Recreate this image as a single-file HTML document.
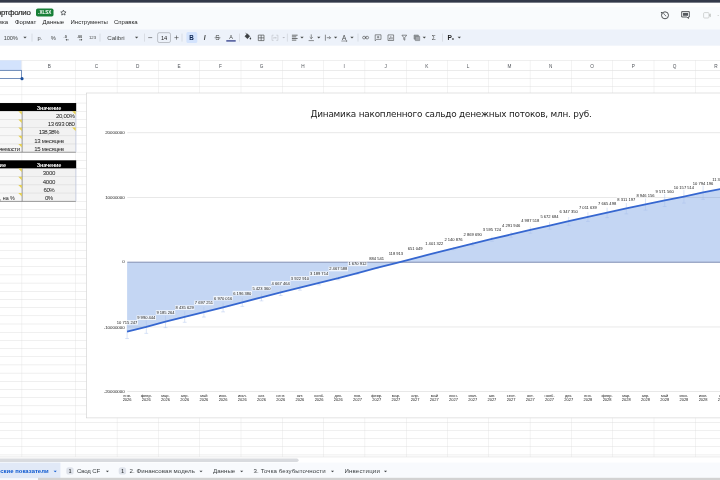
<!DOCTYPE html>
<html lang="ru"><head><meta charset="utf-8"><title>Sheets</title>
<style>
html,body{margin:0;padding:0;}
body{width:720px;height:480px;overflow:hidden;background:#fff;position:relative;font-family:"Liberation Sans",sans-serif;}
#wrap{position:absolute;left:0;top:0;width:720px;height:480px;overflow:hidden;will-change:transform;}
svg{position:absolute;left:0;top:0;overflow:hidden;font-family:"Liberation Sans",sans-serif;}
text{white-space:pre;}
</style></head><body><div id="wrap">

<svg width="720" height="480" viewBox="0 0 720 480">
<rect x="0.00" y="0.00" width="720.00" height="29.40" fill="#f9fbfd" />
<rect x="0.00" y="2.60" width="720.00" height="4.40" fill="#fefefe" />
<rect x="0.00" y="0.00" width="720.00" height="2.65" fill="#333949" />
<text x="30.45" y="14.65" font-size="7.9" fill="#1f1f1f" text-anchor="end" letter-spacing="-0.346" stroke="#1f1f1f" stroke-width="0.15">ортфолио</text>
<rect x="36.00" y="8.50" width="17.50" height="8.00" fill="#188038" rx="1.8"/>
<text x="44.75" y="14.20" font-size="4.6" fill="#ffffff" text-anchor="middle" font-weight="700">.XLSX</text>
<path d="M63.4 10.1l0.8 1.7 1.85 0.19-1.39 1.24 0.4 1.83-1.66-0.95-1.66 0.95 0.4-1.83-1.39-1.24 1.85-0.19z" fill="none" stroke="#3c4043" stroke-width="0.75" stroke-linejoin="round"/>
<text x="-1.20" y="24.10" font-size="6" fill="#1f1f1f" text-anchor="start">вка</text>
<text x="15.00" y="24.10" font-size="6" fill="#1f1f1f" text-anchor="start">Формат</text>
<text x="42.50" y="24.10" font-size="6" fill="#1f1f1f" text-anchor="start">Данные</text>
<text x="70.50" y="24.10" font-size="6" fill="#1f1f1f" text-anchor="start">Инструменты</text>
<text x="114.00" y="24.10" font-size="6" fill="#1f1f1f" text-anchor="start">Справка</text>
<rect x="-10.00" y="29.40" width="740.00" height="16.40" fill="#edf2fa" />
<text x="3.70" y="39.85" font-size="5.7" fill="#444746" text-anchor="start" letter-spacing="-0.145">100%</text>
<text x="39.80" y="39.85" font-size="5.7" fill="#444746" text-anchor="middle">р.</text>
<text x="53.20" y="39.85" font-size="5.7" fill="#444746" text-anchor="middle">%</text>
<text x="92.55" y="38.80" font-size="4.3" fill="#444746" text-anchor="middle">123</text>
<text x="107.20" y="39.80" font-size="6.2" fill="#444746" text-anchor="start" letter-spacing="-0.01">Calibri</text>
<rect x="157.6" y="32.7" width="12.9" height="9.8" rx="1.6" fill="none" stroke="#8a8f94" stroke-width="0.5"/>
<text x="164.10" y="39.85" font-size="5.7" fill="#1f1f1f" text-anchor="middle">14</text>
<rect x="186.4" y="32.1" width="10.9" height="10.9" rx="1.6" fill="#d3e3fd"/>
<text x="191.50" y="39.75" font-size="6.3" fill="#0a2350" text-anchor="middle" font-weight="700">B</text>
<text x="204.70" y="39.80" font-size="6.6" fill="#444746" text-anchor="middle" font-weight="700" font-style="italic">I</text>
<text x="217.50" y="39.95" font-size="6.6" fill="#444746" text-anchor="middle">S</text>
<text x="231.00" y="38.70" font-size="5.4" fill="#444746" text-anchor="middle">A</text>
<text x="433.80" y="40.00" font-size="6.4" fill="#444746" text-anchor="middle">Σ</text>
<text x="344.20" y="39.50" font-size="6.4" fill="#444746" text-anchor="middle">A</text>
<path d="M23.35 36.86h3.30l-1.65 1.65z" fill="#444746"/>
<rect x="31.75" y="33.6" width="0.5" height="8" fill="#c4c8ce"/>
<text x="65.2" y="38.0" font-size="3.9" fill="#444746" text-anchor="middle" font-weight="700">.0</text>
<path d="M66 39.8h2.8" stroke="#444746" stroke-width="0.55" fill="none"/><path d="M65.6 39.8l1.3-1v2z" fill="#444746"/>
<text x="79.6" y="38.0" font-size="3.9" fill="#444746" text-anchor="middle" font-weight="700">.00</text>
<path d="M79 39.8h2.6" stroke="#444746" stroke-width="0.55" fill="none"/><path d="M82.3 39.8l-1.3-1v2z" fill="#444746"/>
<rect x="99.75" y="33.6" width="0.5" height="8" fill="#c4c8ce"/>
<path d="M134.95 36.86h3.30l-1.65 1.65z" fill="#444746"/>
<rect x="144.05" y="33.6" width="0.5" height="8" fill="#c4c8ce"/>
<path d="M148.2 37.6h4" stroke="#444746" stroke-width="0.6"/>
<path d="M174.4 37.6h4.2M176.5 35.5v4.2" stroke="#444746" stroke-width="0.6"/>
<rect x="181.75" y="33.6" width="0.5" height="8" fill="#c4c8ce"/>
<path d="M214.6 37.7h5.8" stroke="#444746" stroke-width="0.55"/>
<rect x="226.3" y="40.2" width="9.4" height="1.4" fill="#3b4890"/>
<rect x="239.25" y="33.6" width="0.5" height="8" fill="#c4c8ce"/>
<path d="M244.9 36.2l2.4-2.4 2.5 2.5-2.4 2.4z" fill="#3c4043" stroke="#3c4043" stroke-width="0.5" stroke-linejoin="round"/><path d="M245.6 33.2l1.6 1.2" stroke="#3c4043" stroke-width="0.7"/>
<path d="M250.4 37.2c0.5 0.7 0.8 1.1 0.8 1.5a0.8 0.8 0 0 1-1.6 0c0-0.4 0.3-0.8 0.8-1.5z" fill="#3c4043"/>
<path d="M258.3 35.1h5.7v5.5h-5.7zM261.15 35.1v5.5M258.3 37.85h5.7" fill="none" stroke="#444746" stroke-width="0.65"/>
<path d="M273.6 35.2h-1.6v5.2h1.6M276.3 35.2h1.6v5.2h-1.6M273 37.8h1.4M276.9 37.8h-1.4M273.9 37l0.8 0.8-0.8 0.8M276 37l-0.8 0.8 0.8 0.8" fill="none" stroke="#b9bdc3" stroke-width="0.55"/>
<path d="M282.30 36.97h2.80l-1.40 1.40z" fill="#b3b7bd"/>
<rect x="286.95" y="33.6" width="0.5" height="8" fill="#c4c8ce"/>
<path d="M291.9 35.2h5.7M291.9 36.85h4.4M291.9 38.5h5.7M291.9 40.15h4.4" stroke="#444746" stroke-width="0.75"/>
<path d="M300.35 36.86h3.30l-1.65 1.65z" fill="#444746"/>
<path d="M311.25 34.4v4.2M309.7 37.2l1.55 1.5 1.55-1.5M308.6 40.6h5.3" fill="none" stroke="#444746" stroke-width="0.6"/>
<path d="M317.15 36.86h3.30l-1.65 1.65z" fill="#444746"/>
<path d="M325.4 34.7v6M326.8 37.7h3.7M329.2 36.3l1.4 1.4-1.4 1.4" fill="none" stroke="#444746" stroke-width="0.6"/>
<path d="M333.95 36.86h3.30l-1.65 1.65z" fill="#444746"/>
<path d="M341.3 41h5.8M346.2 40.2l0.9 0.8-0.9 0.8" fill="none" stroke="#444746" stroke-width="0.5"/>
<path d="M350.35 36.86h3.30l-1.65 1.65z" fill="#444746"/>
<rect x="357.75" y="33.6" width="0.5" height="8" fill="#c4c8ce"/>
<path d="M364.8 37.6h1.6" stroke="#444746" stroke-width="0.6"/><rect x="362.6" y="36.3" width="3" height="2.6" rx="1.3" fill="none" stroke="#444746" stroke-width="0.6"/><rect x="365.6" y="36.3" width="3" height="2.6" rx="1.3" fill="none" stroke="#444746" stroke-width="0.6"/>
<path d="M375.2 34.8h5.8v4.6h-4.4l-1.4 1.4zM378.1 35.9v2.4M376.9 37.1h2.4" fill="none" stroke="#444746" stroke-width="0.6" stroke-linejoin="round"/>
<path d="M388 34.9h5.6v5.6h-5.6z" fill="none" stroke="#444746" stroke-width="0.6"/><path d="M389.5 39.4v-1.6M390.8 39.4v-3.2M392.1 39.4v-2.2" stroke="#444746" stroke-width="0.6"/>
<path d="M401.9 35.2h4.8l-1.9 2.4v2.6l-1 -0.6v-2z" fill="none" stroke="#444746" stroke-width="0.6" stroke-linejoin="round"/>
<path d="M414 35h4.4v4.2h-4.4z" fill="#9a9ea3" stroke="#6b7075" stroke-width="0.5"/><path d="M415.3 36.4h4.4v4.2h-4.4z" fill="#a4a8ad" stroke="#6b7075" stroke-width="0.5"/>
<path d="M422.65 36.86h3.30l-1.65 1.65z" fill="#444746"/>
<rect x="442.25" y="33.6" width="0.5" height="8" fill="#c4c8ce"/>
<text x="447.6" y="39.9" font-size="6.6" fill="#1f1f1f" font-weight="700" font-family="Liberation Sans, sans-serif">P</text>
<text x="451.7" y="40.3" font-size="4" fill="#1f1f1f" font-weight="700" font-family="Liberation Sans, sans-serif">x</text>
<path d="M457.65 36.86h3.30l-1.65 1.65z" fill="#444746"/>
<circle cx="665" cy="15.3" r="3.5" fill="none" stroke="#3c4043" stroke-width="0.9"/><path d="M663.4 13.1l1.6 2.2 1.2 0.8" fill="none" stroke="#3c4043" stroke-width="0.7"/><path d="M660.7 11.9l1.6 0.2-0.4 1.6z" fill="#3c4043"/>
<path d="M681.7 11.6h7.6v5.4h-0.9l0 1.5-1.5-1.5h-5.2z" fill="none" stroke="#3c4043" stroke-width="0.85" stroke-linejoin="round"/><path d="M683 12.9h5v2.9h-5z" fill="#55595e"/>
<rect x="703.6" y="12.6" width="5.4" height="5.4" rx="1" fill="none" stroke="#c4c7c5" stroke-width="0.75"/><path d="M709 14.6l1.8-1.2v3.8l-1.8-1.2z" fill="#c4c7c5"/>
<path d="M717.20 14.95h2.00l-1.00 1.00z" fill="#c4c7c5"/>
<rect x="0.00" y="45.80" width="720.00" height="14.20" fill="#ffffff" />
<rect x="0.00" y="60.05" width="720.00" height="0.50" fill="#dedede" />
<rect x="0.00" y="60.30" width="21.50" height="10.00" fill="#d3e3fd" />
<rect x="0.00" y="70.10" width="720.00" height="0.50" fill="#d6d6d6" />
<text x="49.40" y="68.00" font-size="4.7" fill="#50545a" text-anchor="middle">B</text>
<text x="96.50" y="68.00" font-size="4.7" fill="#50545a" text-anchor="middle">C</text>
<text x="137.75" y="68.00" font-size="4.7" fill="#50545a" text-anchor="middle">D</text>
<text x="179.05" y="68.00" font-size="4.7" fill="#50545a" text-anchor="middle">E</text>
<text x="220.35" y="68.00" font-size="4.7" fill="#50545a" text-anchor="middle">F</text>
<text x="261.65" y="68.00" font-size="4.7" fill="#50545a" text-anchor="middle">G</text>
<text x="302.95" y="68.00" font-size="4.7" fill="#50545a" text-anchor="middle">H</text>
<text x="344.25" y="68.00" font-size="4.7" fill="#50545a" text-anchor="middle">I</text>
<text x="385.55" y="68.00" font-size="4.7" fill="#50545a" text-anchor="middle">J</text>
<text x="426.85" y="68.00" font-size="4.7" fill="#50545a" text-anchor="middle">K</text>
<text x="468.15" y="68.00" font-size="4.7" fill="#50545a" text-anchor="middle">L</text>
<text x="509.45" y="68.00" font-size="4.7" fill="#50545a" text-anchor="middle">M</text>
<text x="550.75" y="68.00" font-size="4.7" fill="#50545a" text-anchor="middle">N</text>
<text x="592.05" y="68.00" font-size="4.7" fill="#50545a" text-anchor="middle">O</text>
<text x="633.35" y="68.00" font-size="4.7" fill="#50545a" text-anchor="middle">P</text>
<text x="674.65" y="68.00" font-size="4.7" fill="#50545a" text-anchor="middle">Q</text>
<text x="715.95" y="68.00" font-size="4.7" fill="#50545a" text-anchor="middle">R</text>
<rect x="21.70" y="60.2" width="0.4" height="396.7" fill="#e0e0e0"/>
<rect x="75.60" y="60.2" width="0.4" height="396.7" fill="#e0e0e0"/>
<rect x="116.90" y="60.2" width="0.4" height="396.7" fill="#e0e0e0"/>
<rect x="158.20" y="60.2" width="0.4" height="396.7" fill="#e0e0e0"/>
<rect x="199.50" y="60.2" width="0.4" height="396.7" fill="#e0e0e0"/>
<rect x="240.80" y="60.2" width="0.4" height="396.7" fill="#e0e0e0"/>
<rect x="282.10" y="60.2" width="0.4" height="396.7" fill="#e0e0e0"/>
<rect x="323.40" y="60.2" width="0.4" height="396.7" fill="#e0e0e0"/>
<rect x="364.70" y="60.2" width="0.4" height="396.7" fill="#e0e0e0"/>
<rect x="406.00" y="60.2" width="0.4" height="396.7" fill="#e0e0e0"/>
<rect x="447.30" y="60.2" width="0.4" height="396.7" fill="#e0e0e0"/>
<rect x="488.60" y="60.2" width="0.4" height="396.7" fill="#e0e0e0"/>
<rect x="529.90" y="60.2" width="0.4" height="396.7" fill="#e0e0e0"/>
<rect x="571.20" y="60.2" width="0.4" height="396.7" fill="#e0e0e0"/>
<rect x="612.50" y="60.2" width="0.4" height="396.7" fill="#e0e0e0"/>
<rect x="653.80" y="60.2" width="0.4" height="396.7" fill="#e0e0e0"/>
<rect x="695.10" y="60.2" width="0.4" height="396.7" fill="#e0e0e0"/>
<rect x="736.40" y="60.2" width="0.4" height="396.7" fill="#e0e0e0"/>
<rect x="0" y="78.27" width="720" height="0.42" fill="#dadada"/>
<rect x="0" y="86.46" width="720" height="0.42" fill="#dadada"/>
<rect x="0" y="94.64" width="720" height="0.42" fill="#dadada"/>
<rect x="0" y="102.83" width="720" height="0.42" fill="#dadada"/>
<rect x="0" y="111.01" width="720" height="0.42" fill="#dadada"/>
<rect x="0" y="119.19" width="720" height="0.42" fill="#dadada"/>
<rect x="0" y="127.38" width="720" height="0.42" fill="#dadada"/>
<rect x="0" y="135.56" width="720" height="0.42" fill="#dadada"/>
<rect x="0" y="143.75" width="720" height="0.42" fill="#dadada"/>
<rect x="0" y="151.93" width="720" height="0.42" fill="#dadada"/>
<rect x="0" y="160.11" width="720" height="0.42" fill="#dadada"/>
<rect x="0" y="168.30" width="720" height="0.42" fill="#dadada"/>
<rect x="0" y="176.48" width="720" height="0.42" fill="#dadada"/>
<rect x="0" y="184.67" width="720" height="0.42" fill="#dadada"/>
<rect x="0" y="192.85" width="720" height="0.42" fill="#dadada"/>
<rect x="0" y="201.03" width="720" height="0.42" fill="#dadada"/>
<rect x="0" y="209.22" width="720" height="0.42" fill="#dadada"/>
<rect x="0" y="217.40" width="720" height="0.42" fill="#dadada"/>
<rect x="0" y="225.59" width="720" height="0.42" fill="#dadada"/>
<rect x="0" y="233.77" width="720" height="0.42" fill="#dadada"/>
<rect x="0" y="241.95" width="720" height="0.42" fill="#dadada"/>
<rect x="0" y="250.14" width="720" height="0.42" fill="#dadada"/>
<rect x="0" y="258.32" width="720" height="0.42" fill="#dadada"/>
<rect x="0" y="266.51" width="720" height="0.42" fill="#dadada"/>
<rect x="0" y="274.69" width="720" height="0.42" fill="#dadada"/>
<rect x="0" y="282.87" width="720" height="0.42" fill="#dadada"/>
<rect x="0" y="291.06" width="720" height="0.42" fill="#dadada"/>
<rect x="0" y="299.24" width="720" height="0.42" fill="#dadada"/>
<rect x="0" y="307.43" width="720" height="0.42" fill="#dadada"/>
<rect x="0" y="315.61" width="720" height="0.42" fill="#dadada"/>
<rect x="0" y="323.79" width="720" height="0.42" fill="#dadada"/>
<rect x="0" y="331.98" width="720" height="0.42" fill="#dadada"/>
<rect x="0" y="340.16" width="720" height="0.42" fill="#dadada"/>
<rect x="0" y="348.35" width="720" height="0.42" fill="#dadada"/>
<rect x="0" y="356.53" width="720" height="0.42" fill="#dadada"/>
<rect x="0" y="364.71" width="720" height="0.42" fill="#dadada"/>
<rect x="0" y="372.90" width="720" height="0.42" fill="#dadada"/>
<rect x="0" y="381.08" width="720" height="0.42" fill="#dadada"/>
<rect x="0" y="389.27" width="720" height="0.42" fill="#dadada"/>
<rect x="0" y="397.45" width="720" height="0.42" fill="#dadada"/>
<rect x="0" y="405.63" width="720" height="0.42" fill="#dadada"/>
<rect x="0" y="413.82" width="720" height="0.42" fill="#dadada"/>
<rect x="0" y="422.00" width="720" height="0.42" fill="#dadada"/>
<rect x="0" y="430.19" width="720" height="0.42" fill="#dadada"/>
<rect x="0" y="438.37" width="720" height="0.42" fill="#dadada"/>
<rect x="0" y="446.55" width="720" height="0.42" fill="#dadada"/>
<rect x="0" y="454.74" width="720" height="0.42" fill="#dadada"/>
<rect x="0" y="103.04" width="76.2" height="8.38" fill="#000"/>
<rect x="0" y="111.22" width="22" height="40.92" fill="#f7f7f7"/>
<rect x="22" y="111.22" width="54" height="40.92" fill="#f2f2f2"/>
<rect x="0" y="119.10" width="75.9" height="0.6" fill="#dadada"/>
<rect x="0" y="127.29" width="75.9" height="0.6" fill="#dadada"/>
<rect x="0" y="135.47" width="75.9" height="0.6" fill="#dadada"/>
<rect x="0" y="143.66" width="75.9" height="0.6" fill="#dadada"/>
<rect x="0" y="151.84" width="75.9" height="0.6" fill="#5e5e5e"/>
<rect x="21.75" y="111.22" width="0.65" height="40.92" fill="#666"/>
<rect x="75.5" y="111.22" width="0.8" height="40.92" fill="#bcc3da"/>
<path d="M18.30 111.22h3.5v3.5z" fill="#e4cc3c" fill-opacity="0.9"/>
<path d="M72.10 111.22h3.5v3.5z" fill="#e4cc3c" fill-opacity="0.9"/>
<path d="M18.30 119.40h3.5v3.5z" fill="#e4cc3c" fill-opacity="0.9"/>
<path d="M18.30 127.59h3.5v3.5z" fill="#e4cc3c" fill-opacity="0.9"/>
<path d="M72.10 127.59h3.5v3.5z" fill="#e4cc3c" fill-opacity="0.9"/>
<path d="M18.30 135.77h3.5v3.5z" fill="#e4cc3c" fill-opacity="0.9"/>
<path d="M18.30 143.96h3.5v3.5z" fill="#e4cc3c" fill-opacity="0.9"/>
<text x="49.02" y="109.57" font-size="5.5" fill="#ffffff" text-anchor="middle" font-weight="700" letter-spacing="-0.15">Значение</text>
<text x="74.69" y="118.05" font-size="6.1" fill="#1a1a1a" text-anchor="end" letter-spacing="-0.315">20,00%</text>
<text x="74.65" y="126.24" font-size="6.1" fill="#1a1a1a" text-anchor="end" letter-spacing="-0.353">13 693 080</text>
<text x="48.84" y="134.42" font-size="6.1" fill="#1a1a1a" text-anchor="middle" letter-spacing="-0.526">138,38%</text>
<text x="48.95" y="142.61" font-size="6.1" fill="#1a1a1a" text-anchor="middle" letter-spacing="-0.308">13 месяцев</text>
<text x="19.64" y="150.79" font-size="6.0" fill="#1a1a1a" text-anchor="end" letter-spacing="-0.364">яемости</text>
<text x="48.95" y="150.79" font-size="6.1" fill="#1a1a1a" text-anchor="middle" letter-spacing="-0.308">15 месяцев</text>
<rect x="0" y="160.32" width="76.2" height="8.38" fill="#000"/>
<rect x="0" y="168.51" width="22" height="32.74" fill="#f7f7f7"/>
<rect x="22" y="168.51" width="54" height="32.74" fill="#f2f2f2"/>
<rect x="0" y="176.39" width="75.9" height="0.6" fill="#dadada"/>
<rect x="0" y="184.58" width="75.9" height="0.6" fill="#dadada"/>
<rect x="0" y="192.76" width="75.9" height="0.6" fill="#dadada"/>
<rect x="0" y="200.94" width="75.9" height="0.6" fill="#5e5e5e"/>
<rect x="21.75" y="168.51" width="0.65" height="32.74" fill="#666"/>
<rect x="75.5" y="168.51" width="0.8" height="32.74" fill="#bcc3da"/>
<path d="M18.30 168.51h3.5v3.5z" fill="#e4cc3c" fill-opacity="0.9"/>
<path d="M18.30 176.69h3.5v3.5z" fill="#e4cc3c" fill-opacity="0.9"/>
<path d="M18.30 184.88h3.5v3.5z" fill="#e4cc3c" fill-opacity="0.9"/>
<path d="M18.30 193.06h3.5v3.5z" fill="#e4cc3c" fill-opacity="0.9"/>
<text x="49.02" y="166.86" font-size="5.5" fill="#ffffff" text-anchor="middle" font-weight="700" letter-spacing="-0.15">Значение</text>
<text x="-0.50" y="166.86" font-size="5.5" fill="#ffffff" text-anchor="start" font-weight="700">ие</text>
<text x="48.93" y="175.34" font-size="6.1" fill="#1a1a1a" text-anchor="middle" letter-spacing="-0.343">3000</text>
<text x="48.93" y="183.53" font-size="6.1" fill="#1a1a1a" text-anchor="middle" letter-spacing="-0.343">4000</text>
<text x="48.83" y="191.71" font-size="6.1" fill="#1a1a1a" text-anchor="middle" letter-spacing="-0.536">60%</text>
<text x="14.63" y="199.89" font-size="5.3" fill="#1a1a1a" text-anchor="end" letter-spacing="-0.067">, на %</text>
<text x="48.80" y="199.89" font-size="6.1" fill="#1a1a1a" text-anchor="middle" letter-spacing="-0.608">0%</text>
<rect x="-2" y="70.3" width="23.5" height="8.1" fill="none" stroke="#3d66a6" stroke-width="0.7"/>
<circle cx="22" cy="78.7" r="1.6" fill="#1c4f9c"/>
<rect x="86.4" y="93.0" width="660" height="324.9" fill="#fff" stroke="#cfcfcf" stroke-width="0.6"/>
<text x="451.10" y="117.20" font-size="8.9" fill="#1a1a1a" text-anchor="middle" letter-spacing="-0.207" font-family="'DejaVu Sans', sans-serif">Динамика накопленного сальдо денежных потоков, млн. руб.</text>
<rect x="127.3" y="132.51" width="600" height="0.6" fill="#d9d9d9"/>
<text x="124.70" y="134.41" font-size="4.4" fill="#222" text-anchor="end">20000000</text>
<rect x="127.3" y="197.23" width="600" height="0.6" fill="#d9d9d9"/>
<text x="124.70" y="199.13" font-size="4.4" fill="#222" text-anchor="end">10000000</text>
<text x="124.70" y="263.35" font-size="4.4" fill="#222" text-anchor="end">0</text>
<rect x="127.3" y="326.67" width="600" height="0.6" fill="#d9d9d9"/>
<text x="124.70" y="328.57" font-size="4.4" fill="#222" text-anchor="end">-10000000</text>
<rect x="127.3" y="391.39" width="600" height="0.6" fill="#d9d9d9"/>
<text x="124.70" y="393.29" font-size="4.4" fill="#222" text-anchor="end">-20000000</text>
<polygon points="127.10,262.25 127.10,331.60 146.30,326.91 165.50,321.70 184.70,316.85 203.90,312.07 223.10,307.36 242.30,302.35 261.50,297.35 280.70,292.46 299.90,287.64 319.10,282.89 338.30,278.22 357.50,273.06 376.70,267.97 395.90,263.02 415.10,258.04 434.30,253.18 453.50,248.39 472.70,243.68 491.90,238.98 511.10,234.47 530.30,229.97 549.50,225.54 568.70,221.17 587.90,216.87 607.10,212.64 626.30,208.46 645.50,204.35 664.70,200.30 683.90,196.51 703.10,192.39 722.30,188.59 741.50,184.59 741.50,262.25" fill="#3c78d8" fill-opacity="0.3"/>
<rect x="127.3" y="261.65" width="600" height="1.2" fill="#909dbe"/>
<path d="M127.10 324.66V338.53M125.20 338.53h3.80" stroke="#a6bdec" stroke-width="0.42" fill="none"/>
<path d="M146.30 320.44V333.37M144.40 333.37h3.80" stroke="#a6bdec" stroke-width="0.42" fill="none"/>
<path d="M165.50 315.75V327.64M163.60 327.64h3.80" stroke="#a6bdec" stroke-width="0.42" fill="none"/>
<path d="M184.70 311.39V322.30M182.80 322.30h3.80" stroke="#a6bdec" stroke-width="0.42" fill="none"/>
<path d="M203.90 307.08V317.05M202.00 317.05h3.80" stroke="#a6bdec" stroke-width="0.42" fill="none"/>
<path d="M223.10 302.85V311.87M221.20 311.87h3.80" stroke="#a6bdec" stroke-width="0.42" fill="none"/>
<path d="M242.30 298.34V306.36M240.40 306.36h3.80" stroke="#a6bdec" stroke-width="0.42" fill="none"/>
<path d="M261.50 293.84V300.86M259.60 300.86h3.80" stroke="#a6bdec" stroke-width="0.42" fill="none"/>
<path d="M280.70 289.44V295.48M278.80 295.48h3.80" stroke="#a6bdec" stroke-width="0.42" fill="none"/>
<path d="M299.90 285.10V290.18M298.00 290.18h3.80" stroke="#a6bdec" stroke-width="0.42" fill="none"/>
<path d="M319.10 280.83V284.96M317.20 284.96h3.80" stroke="#a6bdec" stroke-width="0.42" fill="none"/>
<path d="M338.30 276.62V279.82M336.40 279.82h3.80" stroke="#a6bdec" stroke-width="0.42" fill="none"/>
<path d="M357.50 271.98V274.15M355.60 274.15h3.80" stroke="#a6bdec" stroke-width="0.42" fill="none"/>
<path d="M376.70 267.40V268.55M374.80 268.55h3.80" stroke="#a6bdec" stroke-width="0.42" fill="none"/>
<path d="M415.10 257.62V258.46M413.20 258.46h3.80" stroke="#a6bdec" stroke-width="0.42" fill="none"/>
<path d="M434.30 252.27V254.09M432.40 254.09h3.80" stroke="#a6bdec" stroke-width="0.42" fill="none"/>
<path d="M453.50 247.01V249.78M451.60 249.78h3.80" stroke="#a6bdec" stroke-width="0.42" fill="none"/>
<path d="M472.70 241.82V245.53M470.80 245.53h3.80" stroke="#a6bdec" stroke-width="0.42" fill="none"/>
<path d="M491.90 236.65V241.31M490.00 241.31h3.80" stroke="#a6bdec" stroke-width="0.42" fill="none"/>
<path d="M511.10 231.69V237.25M509.20 237.25h3.80" stroke="#a6bdec" stroke-width="0.42" fill="none"/>
<path d="M530.30 226.74V233.20M528.40 233.20h3.80" stroke="#a6bdec" stroke-width="0.42" fill="none"/>
<path d="M549.50 221.87V229.21M547.60 229.21h3.80" stroke="#a6bdec" stroke-width="0.42" fill="none"/>
<path d="M568.70 217.06V225.28M566.80 225.28h3.80" stroke="#a6bdec" stroke-width="0.42" fill="none"/>
<path d="M587.90 212.33V221.41M586.00 221.41h3.80" stroke="#a6bdec" stroke-width="0.42" fill="none"/>
<path d="M607.10 207.68V217.60M605.20 217.60h3.80" stroke="#a6bdec" stroke-width="0.42" fill="none"/>
<path d="M626.30 203.08V213.84M624.40 213.84h3.80" stroke="#a6bdec" stroke-width="0.42" fill="none"/>
<path d="M645.50 198.56V210.14M643.60 210.14h3.80" stroke="#a6bdec" stroke-width="0.42" fill="none"/>
<path d="M664.70 194.11V206.50M662.80 206.50h3.80" stroke="#a6bdec" stroke-width="0.42" fill="none"/>
<path d="M683.90 189.94V203.08M682.00 203.08h3.80" stroke="#a6bdec" stroke-width="0.42" fill="none"/>
<path d="M703.10 185.40V199.38M701.20 199.38h3.80" stroke="#a6bdec" stroke-width="0.42" fill="none"/>
<path d="M722.30 181.22V195.96M720.40 195.96h3.80" stroke="#a6bdec" stroke-width="0.42" fill="none"/>
<path d="M741.50 176.82V192.35M739.60 192.35h3.80" stroke="#a6bdec" stroke-width="0.42" fill="none"/>
<polyline points="127.10,331.60 146.30,326.91 165.50,321.70 184.70,316.85 203.90,312.07 223.10,307.36 242.30,302.35 261.50,297.35 280.70,292.46 299.90,287.64 319.10,282.89 338.30,278.22 357.50,273.06 376.70,267.97 395.90,263.02 415.10,258.04 434.30,253.18 453.50,248.39 472.70,243.68 491.90,238.98 511.10,234.47 530.30,229.97 549.50,225.54 568.70,221.17 587.90,216.87 607.10,212.64 626.30,208.46 645.50,204.35 664.70,200.30 683.90,196.51 703.10,192.39 722.30,188.59 741.50,184.59" fill="none" stroke="#3667d0" stroke-width="1.8" stroke-linejoin="round"/>
<rect x="116.24" y="320.10" width="21.72" height="4.6" fill="#ffffff" fill-opacity="0.75"/>
<text x="127.10" y="323.87" font-size="4.1" fill="#222" text-anchor="middle">10 715 247</text>
<rect x="136.58" y="315.41" width="19.44" height="4.6" fill="#ffffff" fill-opacity="0.75"/>
<text x="146.30" y="319.18" font-size="4.1" fill="#222" text-anchor="middle">9 990 444</text>
<rect x="155.78" y="310.20" width="19.44" height="4.6" fill="#ffffff" fill-opacity="0.75"/>
<text x="165.50" y="313.97" font-size="4.1" fill="#222" text-anchor="middle">9 185 264</text>
<rect x="174.98" y="305.35" width="19.44" height="4.6" fill="#ffffff" fill-opacity="0.75"/>
<text x="184.70" y="309.12" font-size="4.1" fill="#222" text-anchor="middle">8 435 629</text>
<rect x="194.18" y="300.57" width="19.44" height="4.6" fill="#ffffff" fill-opacity="0.75"/>
<text x="203.90" y="304.34" font-size="4.1" fill="#222" text-anchor="middle">7 697 251</text>
<rect x="213.38" y="295.86" width="19.44" height="4.6" fill="#ffffff" fill-opacity="0.75"/>
<text x="223.10" y="299.63" font-size="4.1" fill="#222" text-anchor="middle">6 970 016</text>
<rect x="232.58" y="290.85" width="19.44" height="4.6" fill="#ffffff" fill-opacity="0.75"/>
<text x="242.30" y="294.62" font-size="4.1" fill="#222" text-anchor="middle">6 196 380</text>
<rect x="251.78" y="285.85" width="19.44" height="4.6" fill="#ffffff" fill-opacity="0.75"/>
<text x="261.50" y="289.62" font-size="4.1" fill="#222" text-anchor="middle">5 423 360</text>
<rect x="270.98" y="280.96" width="19.44" height="4.6" fill="#ffffff" fill-opacity="0.75"/>
<text x="280.70" y="284.73" font-size="4.1" fill="#222" text-anchor="middle">4 667 464</text>
<rect x="290.18" y="276.14" width="19.44" height="4.6" fill="#ffffff" fill-opacity="0.75"/>
<text x="299.90" y="279.91" font-size="4.1" fill="#222" text-anchor="middle">3 922 910</text>
<rect x="309.38" y="271.39" width="19.44" height="4.6" fill="#ffffff" fill-opacity="0.75"/>
<text x="319.10" y="275.16" font-size="4.1" fill="#222" text-anchor="middle">3 189 714</text>
<rect x="328.58" y="266.72" width="19.44" height="4.6" fill="#ffffff" fill-opacity="0.75"/>
<text x="338.30" y="270.49" font-size="4.1" fill="#222" text-anchor="middle">2 467 588</text>
<rect x="347.78" y="261.56" width="19.44" height="4.6" fill="#ffffff" fill-opacity="0.75"/>
<text x="357.50" y="265.33" font-size="4.1" fill="#222" text-anchor="middle">1 670 912</text>
<rect x="368.69" y="256.47" width="16.02" height="4.6" fill="#ffffff" fill-opacity="0.75"/>
<text x="376.70" y="260.24" font-size="4.1" fill="#222" text-anchor="middle">884 541</text>
<rect x="388.04" y="251.52" width="15.72" height="4.6" fill="#ffffff" fill-opacity="0.75"/>
<text x="395.90" y="255.29" font-size="4.1" fill="#222" text-anchor="middle">118 913</text>
<rect x="407.09" y="246.54" width="16.02" height="4.6" fill="#ffffff" fill-opacity="0.75"/>
<text x="415.10" y="250.31" font-size="4.1" fill="#222" text-anchor="middle">651 049</text>
<rect x="424.58" y="241.68" width="19.44" height="4.6" fill="#ffffff" fill-opacity="0.75"/>
<text x="434.30" y="245.45" font-size="4.1" fill="#222" text-anchor="middle">1 401 322</text>
<rect x="443.78" y="236.89" width="19.44" height="4.6" fill="#ffffff" fill-opacity="0.75"/>
<text x="453.50" y="240.66" font-size="4.1" fill="#222" text-anchor="middle">2 140 876</text>
<rect x="462.98" y="232.18" width="19.44" height="4.6" fill="#ffffff" fill-opacity="0.75"/>
<text x="472.70" y="235.95" font-size="4.1" fill="#222" text-anchor="middle">2 869 690</text>
<rect x="482.18" y="227.48" width="19.44" height="4.6" fill="#ffffff" fill-opacity="0.75"/>
<text x="491.90" y="231.25" font-size="4.1" fill="#222" text-anchor="middle">3 595 724</text>
<rect x="501.38" y="222.97" width="19.44" height="4.6" fill="#ffffff" fill-opacity="0.75"/>
<text x="511.10" y="226.74" font-size="4.1" fill="#222" text-anchor="middle">4 291 946</text>
<rect x="520.58" y="218.47" width="19.44" height="4.6" fill="#ffffff" fill-opacity="0.75"/>
<text x="530.30" y="222.24" font-size="4.1" fill="#222" text-anchor="middle">4 987 518</text>
<rect x="539.78" y="214.04" width="19.44" height="4.6" fill="#ffffff" fill-opacity="0.75"/>
<text x="549.50" y="217.81" font-size="4.1" fill="#222" text-anchor="middle">5 672 684</text>
<rect x="558.98" y="209.67" width="19.44" height="4.6" fill="#ffffff" fill-opacity="0.75"/>
<text x="568.70" y="213.44" font-size="4.1" fill="#222" text-anchor="middle">6 347 350</text>
<rect x="578.33" y="205.37" width="19.14" height="4.6" fill="#ffffff" fill-opacity="0.75"/>
<text x="587.90" y="209.14" font-size="4.1" fill="#222" text-anchor="middle">7 011 639</text>
<rect x="597.38" y="201.14" width="19.44" height="4.6" fill="#ffffff" fill-opacity="0.75"/>
<text x="607.10" y="204.91" font-size="4.1" fill="#222" text-anchor="middle">7 665 498</text>
<rect x="616.73" y="196.96" width="19.14" height="4.6" fill="#ffffff" fill-opacity="0.75"/>
<text x="626.30" y="200.73" font-size="4.1" fill="#222" text-anchor="middle">8 311 197</text>
<rect x="635.78" y="192.85" width="19.44" height="4.6" fill="#ffffff" fill-opacity="0.75"/>
<text x="645.50" y="196.62" font-size="4.1" fill="#222" text-anchor="middle">8 946 156</text>
<rect x="654.98" y="188.80" width="19.44" height="4.6" fill="#ffffff" fill-opacity="0.75"/>
<text x="664.70" y="192.57" font-size="4.1" fill="#222" text-anchor="middle">9 571 560</text>
<rect x="673.04" y="185.01" width="21.72" height="4.6" fill="#ffffff" fill-opacity="0.75"/>
<text x="683.90" y="188.78" font-size="4.1" fill="#222" text-anchor="middle">10 157 514</text>
<rect x="692.24" y="180.89" width="21.72" height="4.6" fill="#ffffff" fill-opacity="0.75"/>
<text x="703.10" y="184.66" font-size="4.1" fill="#222" text-anchor="middle">10 794 196</text>
<rect x="711.59" y="177.09" width="21.42" height="4.6" fill="#ffffff" fill-opacity="0.75"/>
<text x="722.30" y="180.86" font-size="4.1" fill="#222" text-anchor="middle">11 381 200</text>
<rect x="730.64" y="173.09" width="21.72" height="4.6" fill="#ffffff" fill-opacity="0.75"/>
<text x="741.50" y="176.86" font-size="4.1" fill="#222" text-anchor="middle">12 000 000</text>
<text x="127.10" y="397.20" font-size="4.0" fill="#222" text-anchor="middle">янв.</text>
<text x="127.10" y="401.10" font-size="4.0" fill="#222" text-anchor="middle">2026</text>
<text x="146.30" y="397.20" font-size="4.0" fill="#222" text-anchor="middle">февр.</text>
<text x="146.30" y="401.10" font-size="4.0" fill="#222" text-anchor="middle">2026</text>
<text x="165.50" y="397.20" font-size="4.0" fill="#222" text-anchor="middle">мар.</text>
<text x="165.50" y="401.10" font-size="4.0" fill="#222" text-anchor="middle">2026</text>
<text x="184.70" y="397.20" font-size="4.0" fill="#222" text-anchor="middle">апр.</text>
<text x="184.70" y="401.10" font-size="4.0" fill="#222" text-anchor="middle">2026</text>
<text x="203.90" y="397.20" font-size="4.0" fill="#222" text-anchor="middle">май</text>
<text x="203.90" y="401.10" font-size="4.0" fill="#222" text-anchor="middle">2026</text>
<text x="223.10" y="397.20" font-size="4.0" fill="#222" text-anchor="middle">июн.</text>
<text x="223.10" y="401.10" font-size="4.0" fill="#222" text-anchor="middle">2026</text>
<text x="242.30" y="397.20" font-size="4.0" fill="#222" text-anchor="middle">июл.</text>
<text x="242.30" y="401.10" font-size="4.0" fill="#222" text-anchor="middle">2026</text>
<text x="261.50" y="397.20" font-size="4.0" fill="#222" text-anchor="middle">авг.</text>
<text x="261.50" y="401.10" font-size="4.0" fill="#222" text-anchor="middle">2026</text>
<text x="280.70" y="397.20" font-size="4.0" fill="#222" text-anchor="middle">сент.</text>
<text x="280.70" y="401.10" font-size="4.0" fill="#222" text-anchor="middle">2026</text>
<text x="299.90" y="397.20" font-size="4.0" fill="#222" text-anchor="middle">окт.</text>
<text x="299.90" y="401.10" font-size="4.0" fill="#222" text-anchor="middle">2026</text>
<text x="319.10" y="397.20" font-size="4.0" fill="#222" text-anchor="middle">нояб.</text>
<text x="319.10" y="401.10" font-size="4.0" fill="#222" text-anchor="middle">2026</text>
<text x="338.30" y="397.20" font-size="4.0" fill="#222" text-anchor="middle">дек.</text>
<text x="338.30" y="401.10" font-size="4.0" fill="#222" text-anchor="middle">2026</text>
<text x="357.50" y="397.20" font-size="4.0" fill="#222" text-anchor="middle">янв.</text>
<text x="357.50" y="401.10" font-size="4.0" fill="#222" text-anchor="middle">2027</text>
<text x="376.70" y="397.20" font-size="4.0" fill="#222" text-anchor="middle">февр.</text>
<text x="376.70" y="401.10" font-size="4.0" fill="#222" text-anchor="middle">2027</text>
<text x="395.90" y="397.20" font-size="4.0" fill="#222" text-anchor="middle">мар.</text>
<text x="395.90" y="401.10" font-size="4.0" fill="#222" text-anchor="middle">2027</text>
<text x="415.10" y="397.20" font-size="4.0" fill="#222" text-anchor="middle">апр.</text>
<text x="415.10" y="401.10" font-size="4.0" fill="#222" text-anchor="middle">2027</text>
<text x="434.30" y="397.20" font-size="4.0" fill="#222" text-anchor="middle">май</text>
<text x="434.30" y="401.10" font-size="4.0" fill="#222" text-anchor="middle">2027</text>
<text x="453.50" y="397.20" font-size="4.0" fill="#222" text-anchor="middle">июн.</text>
<text x="453.50" y="401.10" font-size="4.0" fill="#222" text-anchor="middle">2027</text>
<text x="472.70" y="397.20" font-size="4.0" fill="#222" text-anchor="middle">июл.</text>
<text x="472.70" y="401.10" font-size="4.0" fill="#222" text-anchor="middle">2027</text>
<text x="491.90" y="397.20" font-size="4.0" fill="#222" text-anchor="middle">авг.</text>
<text x="491.90" y="401.10" font-size="4.0" fill="#222" text-anchor="middle">2027</text>
<text x="511.10" y="397.20" font-size="4.0" fill="#222" text-anchor="middle">сент.</text>
<text x="511.10" y="401.10" font-size="4.0" fill="#222" text-anchor="middle">2027</text>
<text x="530.30" y="397.20" font-size="4.0" fill="#222" text-anchor="middle">окт.</text>
<text x="530.30" y="401.10" font-size="4.0" fill="#222" text-anchor="middle">2027</text>
<text x="549.50" y="397.20" font-size="4.0" fill="#222" text-anchor="middle">нояб.</text>
<text x="549.50" y="401.10" font-size="4.0" fill="#222" text-anchor="middle">2027</text>
<text x="568.70" y="397.20" font-size="4.0" fill="#222" text-anchor="middle">дек.</text>
<text x="568.70" y="401.10" font-size="4.0" fill="#222" text-anchor="middle">2027</text>
<text x="587.90" y="397.20" font-size="4.0" fill="#222" text-anchor="middle">янв.</text>
<text x="587.90" y="401.10" font-size="4.0" fill="#222" text-anchor="middle">2028</text>
<text x="607.10" y="397.20" font-size="4.0" fill="#222" text-anchor="middle">февр.</text>
<text x="607.10" y="401.10" font-size="4.0" fill="#222" text-anchor="middle">2028</text>
<text x="626.30" y="397.20" font-size="4.0" fill="#222" text-anchor="middle">мар.</text>
<text x="626.30" y="401.10" font-size="4.0" fill="#222" text-anchor="middle">2028</text>
<text x="645.50" y="397.20" font-size="4.0" fill="#222" text-anchor="middle">апр.</text>
<text x="645.50" y="401.10" font-size="4.0" fill="#222" text-anchor="middle">2028</text>
<text x="664.70" y="397.20" font-size="4.0" fill="#222" text-anchor="middle">май</text>
<text x="664.70" y="401.10" font-size="4.0" fill="#222" text-anchor="middle">2028</text>
<text x="683.90" y="397.20" font-size="4.0" fill="#222" text-anchor="middle">июн.</text>
<text x="683.90" y="401.10" font-size="4.0" fill="#222" text-anchor="middle">2028</text>
<text x="703.10" y="397.20" font-size="4.0" fill="#222" text-anchor="middle">июл.</text>
<text x="703.10" y="401.10" font-size="4.0" fill="#222" text-anchor="middle">2028</text>
<text x="722.30" y="397.20" font-size="4.0" fill="#222" text-anchor="middle">авг.</text>
<text x="722.30" y="401.10" font-size="4.0" fill="#222" text-anchor="middle">2028</text>
<text x="741.50" y="397.20" font-size="4.0" fill="#222" text-anchor="middle">сент.</text>
<text x="741.50" y="401.10" font-size="4.0" fill="#222" text-anchor="middle">2028</text>
<rect x="0.00" y="457.00" width="720.00" height="6.00" fill="#ffffff" />
<rect x="0" y="456.7" width="720" height="0.5" fill="#d8d8d8"/>
<rect x="-4" y="458.4" width="302.6" height="3.7" rx="1.8" fill="#d9dbdf"/>
<rect x="0" y="462.6" width="720" height="17.4" fill="#f8fafd"/>
<rect x="0" y="462.6" width="60.4" height="15.6" fill="#e1e9f7"/>
<text x="48.64" y="473.30" font-size="5.9" fill="#0b57d0" text-anchor="end" font-weight="700" letter-spacing="0.037">ские показатели</text>
<text x="77.00" y="473.30" font-size="6.1" fill="#3c4043" text-anchor="start" letter-spacing="-0.175">Свод CF</text>
<text x="129.50" y="473.30" font-size="6.1" fill="#3c4043" text-anchor="start" letter-spacing="0.076">2. Финансовая модель</text>
<text x="213.00" y="473.30" font-size="6.1" fill="#3c4043" text-anchor="start" letter-spacing="0.044">Данные</text>
<text x="253.60" y="473.30" font-size="6.1" fill="#3c4043" text-anchor="start" letter-spacing="0.098">3. Точка безубыточности</text>
<text x="344.40" y="473.30" font-size="6.1" fill="#3c4043" text-anchor="start" letter-spacing="0.172">Инвестиции</text>
<rect x="66.3" y="467.3" width="7.4" height="7.2" rx="2.6" fill="#dee2ea"/>
<text x="70.10" y="472.70" font-size="4.8" fill="#3c4043" text-anchor="middle" font-weight="700">1</text>
<rect x="118.7" y="467.3" width="7.4" height="7.2" rx="2.6" fill="#dee2ea"/>
<text x="122.50" y="472.70" font-size="4.8" fill="#3c4043" text-anchor="middle" font-weight="700">1</text>
<path d="M53.65 470.70h3.10l-1.55 1.55z" fill="#0b57d0"/>
<path d="M105.85 470.70h3.10l-1.55 1.55z" fill="#3c4043"/>
<path d="M199.45 470.70h3.10l-1.55 1.55z" fill="#3c4043"/>
<path d="M240.15 470.70h3.10l-1.55 1.55z" fill="#3c4043"/>
<path d="M330.95 470.70h3.10l-1.55 1.55z" fill="#3c4043"/>
<path d="M383.95 470.70h3.10l-1.55 1.55z" fill="#3c4043"/>
<rect x="38" y="477.8" width="690" height="2.2" fill="#d2d2d2"/>
</svg>
</div></body></html>
